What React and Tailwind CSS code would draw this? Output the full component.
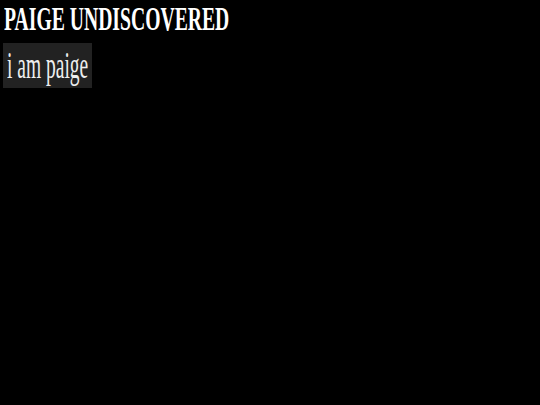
export default function App() {
  return (
    <div className="w-[540px] h-[405px] bg-black overflow-hidden font-['Liberation_Serif',_'Times_New_Roman',_serif]">
      <div className="pl-[4px] pt-[1px] h-[40px]">
        <span className="inline-block origin-left scale-x-[0.57] text-[34.5px] leading-none font-bold text-white whitespace-nowrap">
          PAIGE UNDISCOVERED
        </span>
      </div>
      <div className="ml-[3px] mt-[3px] w-[89px] h-[45px] bg-[#222222] flex items-center pl-[4px]">
        <span className="inline-block origin-left scale-x-[0.52] text-[37.5px] leading-none text-[#eeeeee] whitespace-nowrap">
          i am paige
        </span>
      </div>
    </div>
  );
}
